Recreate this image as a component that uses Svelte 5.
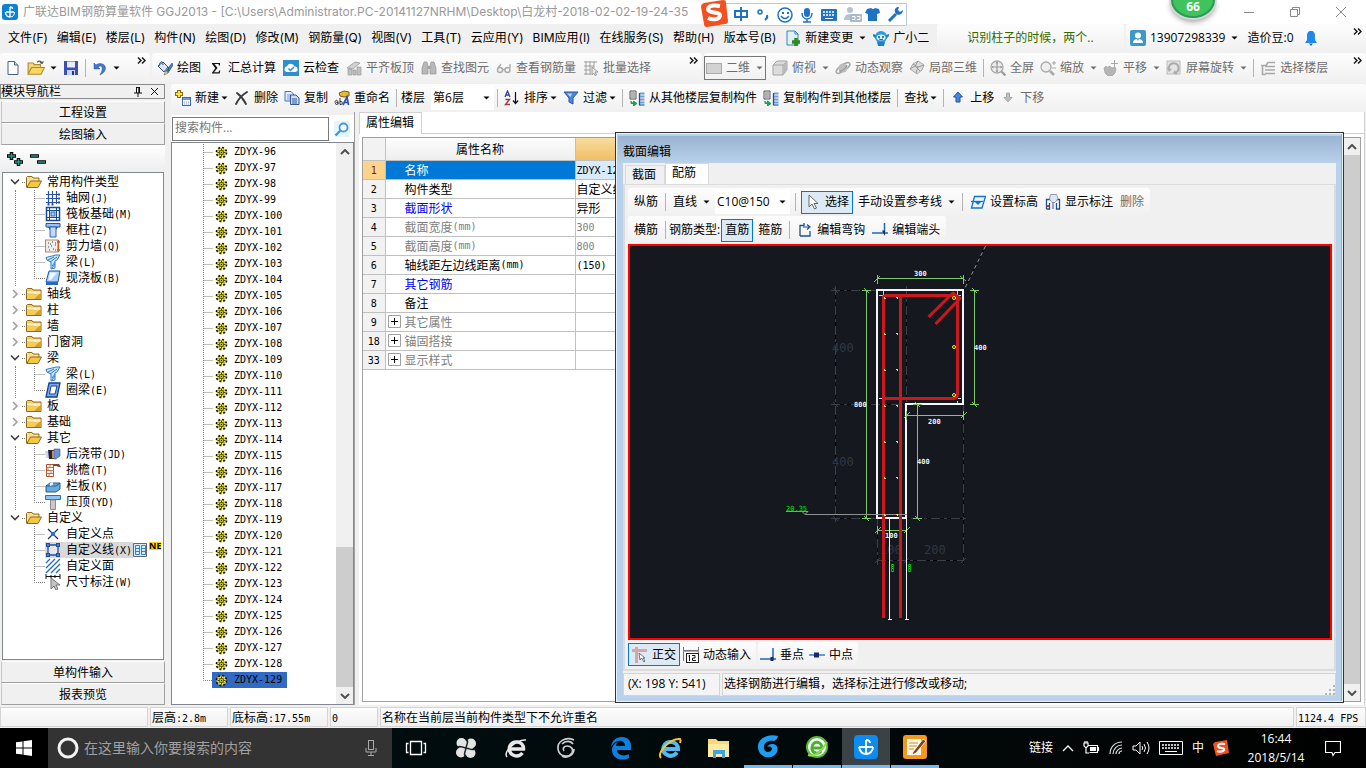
<script>
  const icons = {
    app: '<rect width="16" height="16" rx="3" fill="#0a82d8"/><path d="M8 3v10M4 8h8M8 3c2 0 2.500 1 2.500 2M8 13c-2.500 0-4.500-1.500-4.500-5" fill="none" stroke="#fff" stroke-width="1.400"/><path d="M8 13c3 0 4.500-2 4.500-5" fill="none" stroke="#fff"/>',
    new: '<path d="M3 1.500h6.500L13 5v9.500H3z" fill="#fff" stroke="#4a5f85"/><path d="M9.500 1.500V5H13" fill="#cfdcf0" stroke="#4a5f85"/>',
    open: '<path d="M1 13V3.500h4.500l1 1.500H12v3" fill="#f5d67c" stroke="#b08a2e"/><path d="M1 13.500 4 7.500h11.500L12.500 13.500z" fill="#fbd65f" stroke="#b08a2e"/><path d="M9 3c2-2 4-1 4.500 1m0 0 1-2m-1 2-2-1" fill="none" stroke="#555"/>',
    save: '<path d="M1 1h14v14H1z" fill="#3c4fb4"/><path d="M4 1.500h8v6H4z" fill="#e8edfb"/><path d="M4 10h8v5H4z" fill="#c7d3f5"/><path d="M9 11h2v4H9z" fill="#26348a"/>',
    undo: '<path d="M2 3v6h6L6 7c3-2.500 6 0 3 6l-1 2c6-3 7-8 3.500-10.500C9 3 6 3.500 4 5z" fill="#3f76cf" stroke="#2a579f" stroke-width=".5"/>',
    paint: '<path d="m1 6 5-4 5 5-4 5z" fill="#dbe6f6" stroke="#35506f"/><path d="M2 6c1-5 4-6 4-1" fill="none" stroke="#35506f"/><path d="m15 3-6 8-2 4 4-2 5-8z" fill="#3f7ad0" stroke="#1d477f" stroke-width=".6"/><path d="m7 15 2-4 2 2z" fill="#e9c34a"/><path d="M11 7c1 1 1 3 0 4" stroke="#35506f" fill="none"/>',
    sigma: '<path d="M4 3h8v2.500h-1L10.500 4H6.500l3 4-3.500 4.200h4.500l.7-1.700h1L11.700 13.500H4v-.8L7.300 8.300 4 3.800z" fill="#111"/>',
    cloud: '<rect width="16" height="16" fill="#2d8fd0"/><path d="M3.500 12a3 3 0 0 1 .5-5.800 4 4 0 0 1 7.500.3 2.800 2.800 0 0 1 1 5.500z" fill="#fff"/><path d="m5.500 8.500 2 2 3.500-3.500" fill="none" stroke="#2d8fd0" stroke-width="1.500"/>',
    align: '<path d="m1 8 8-6 5 1-7 6z" fill="#d0d0d0" stroke="#9a9a9a" stroke-width=".8"/><path d="M2 9h4v6H2zM7 10h3v5H7zM11 7h4v8h-4z" fill="#c0c0c0" stroke="#9a9a9a" stroke-width=".7"/>',
    binoc: '<path d="M3 2h3l1 4v8H1V8zm7 0h3l2 6v6H9V6z" fill="#b8b8b8" stroke="#969696" stroke-width=".7"/><path d="M6 6h4v3H6z" fill="#a5a5a5"/>',
    glasses: '<circle cx="4" cy="10" r="2.500" fill="none" stroke="#aaa" stroke-width="1.500"/><circle cx="11.500" cy="10" r="2.500" fill="none" stroke="#aaa" stroke-width="1.500"/><path d="M6.500 9.500h2.500M2 8l3-4M14 8V4" stroke="#aaa" fill="none" stroke-width="1.300"/>',
    batch: '<path d="M1 2h13M1 6h10M1 10h7M1 14h7M3 1v14M7 1v14M11 1v7" stroke="#a0a0a0" fill="none"/><path d="m9 7 6 5h-3l1.500 3-1.500.6L10.600 13 9 15z" fill="#eee" stroke="#999"/>',
    view2d: '<rect x="0.500" y="3.500" width="15" height="10" fill="#d2d2d2" stroke="#aaa"/>',
    cube: '<path d="M1 5l4-4h10v9l-4 5H1z" fill="#dcdcdc" stroke="#a4a4a4"/><path d="M1 5h10v10M11 5l4-4" fill="none" stroke="#a4a4a4"/><path d="M11 5l4-4v9l-4 5z" fill="#bbb"/>',
    orbit: '<ellipse cx="8" cy="8" rx="8" ry="3" transform="rotate(-35 8 8)" fill="none" stroke="#aaa" stroke-width="1.500"/><circle cx="8" cy="8" r="4.500" fill="#bdbdbd"/><path d="M4 11c3 1 7-3 8-6" stroke="#888" fill="none"/>',
    local3d: '<path d="m1 9 3-5 5-3 6 4-2 5-5 4z" fill="#ddd" stroke="#aaa"/><path d="m1 9 5-3 5 5M4 4l5 3 6-2M6 6l3-5M9 7l-2 6" fill="none" stroke="#999"/>',
    fit: '<circle cx="7" cy="7" r="6" fill="#eee" stroke="#aaa" stroke-width="1.300"/><path d="M7 2v10M2 7h10" stroke="#999" stroke-width="1.200"/><path d="M11.500 11.500l4 4" stroke="#999" stroke-width="2.200"/><path d="m5.500 3.500 1.500-2 1.500 2zm0 7 1.500 2 1.500-2zM3.500 5.500l-2 1.500 2 1.500zm7 0 2 1.500-2 1.500z" fill="#999"/>',
    zoom: '<circle cx="6" cy="7" r="5" fill="#eee" stroke="#aaa" stroke-width="1.300"/><path d="M10 11l4 4" stroke="#aaa" stroke-width="2.500"/><path d="M12 3h4M14 1v4M12 8h4" stroke="#aaa"/>',
    pan: '<path d="M1 8l2-2 2 2 1-2 2 1 1 1 3-1 1 2-1 4-3 3H5l-3-3z" fill="#b5b5b5" stroke="#999" stroke-width=".6"/><path d="M11.500 0v7M8 3.500h7" stroke="#aaa"/>',
    rotate: '<rect x="1" y="1" width="13" height="13" fill="#e4e4e4" stroke="#bbb"/><path d="M3 10a5 5 0 1 1 6 3" fill="none" stroke="#aaa" stroke-width="2"/><path d="m1 8 2 4 3-3zM9 10l-2 3 4 2z" fill="#aaa"/>',
    floor: '<path d="M1 5.500h5l2-3h7M5 6.500h10M5 10h10M5 13.500h10M2.500 6v8.500h3" stroke="#a8a8a8" stroke-width="1.600" fill="none"/>',
    newcomp: '<path d="M4 0v8M0 4h8" stroke="#8a6e00" stroke-width="4"/><path d="M4 1v6M1 4h6" stroke="#ffe34a" stroke-width="2"/><rect x="7.500" y="7.500" width="8" height="8" fill="#fff" stroke="#4169b4"/><path d="M8 8h7v2H8z" fill="#6f95dd"/><path d="M9 12h5M9 14h5" stroke="#6f95dd" stroke-dasharray="1 1"/>',
    del: '<path d="M3 3c4 3 7 7 9 11M13 2C8 5 4 10 2 14" stroke="#3c3c3c" stroke-width="1.900" fill="none" stroke-linecap="round"/>',
    copy: '<path d="M1 1.500h6l2.500 2.500v7H1z" fill="#e3edfb" stroke="#4672b8"/><path d="M3 5h4M3 7h4M3 9h4" stroke="#6f95dd"/><path d="M6.500 5h5.500l3 3v6.500H6.500z" fill="#c9dcf8" stroke="#34589b"/><path d="M8 9h5M8 11h5M8 13h5" stroke="#34589b"/>',
    rename: '<path d="m5 3 5-2 5 1v4l-5 1-4-1z" fill="#e8b83a" stroke="#7a5c10"/><path d="M1 12.500c0-3 3-3 3 0v2m0-2c-3-1-3 2-1.500 2S4 13.500 4 12.500M6 8v6.500c3 1 3-4 0-3" fill="none" stroke="#333"/><path d="m9 15 4-8 1.500 8M10.500 12.500h4" fill="none" stroke="#2a56b8" stroke-width="1.700"/>',
    sort: '<path d="M1 7l2.500-6L6 7M2 5h3" fill="none" stroke="#33478f" stroke-width="1.300"/><path d="M1.500 9.500h4l-4 5h4.500" fill="none" stroke="#a13c4c" stroke-width="1.400"/><path d="M11.500 2v11M9 10.500l2.500 3 2.500-3" fill="none" stroke="#111" stroke-width="1.200"/>',
    filter: '<path d="M1 2h14L10 8v6l-4-2V8z" fill="#4e86dd" stroke="#2555a5"/><path d="M4 3.500h5L7.500 7z" fill="#b8d4ff"/>',
    copyfrom: '<path d="M1 1h6v8H1z" fill="#eee" stroke="#555"/><path d="M2 3h4M2 5h4M2 7h4" stroke="#777"/><path d="M11 3.500h4.500M11 6.500h4.500M11 9.500h4.500M11 12.500h4.500M11 15h4.500" stroke="#6f9fd8" stroke-width="1.800"/><path d="M10.500 3v12.500" stroke="#1f4f96" stroke-width="1.300"/><path d="M2 11v2.500h3M4.500 11v5L8 13.500z" stroke="#1ca349" fill="#1ca349"/>',
    newchange: '<path d="M2 1h8l3 3v11H2z" fill="#dff0fb" stroke="#3a86b8"/><path d="M10 1v3h3" fill="none" stroke="#3a86b8"/><path d="M11 8v8M7 12h8" stroke="#2e8c1e" stroke-width="3.500"/>',
    robot: '<circle cx="8" cy="7" r="6" fill="#2a9be0"/><path d="M0 4l3 1v4L0 6zM16 4l-3 1v4l3-3zM4 12h8l-1 4H5z" fill="#1d7fc4"/><ellipse cx="8" cy="7.500" rx="4.500" ry="3" fill="#d9f0fc"/><circle cx="6" cy="7" r="1" fill="#16577f"/><circle cx="10" cy="7" r="1" fill="#16577f"/><path d="M6 9q2 1.500 4 0" stroke="#16577f" fill="none"/>',
    user: '<rect width="16" height="16" rx="2" fill="#3d97c8"/><circle cx="8" cy="5.500" r="3" fill="#fff"/><path d="M3 13q0-4 5-4t5 4z" fill="#fff"/><path d="m7 9 1 2 1-2z" fill="#3d97c8"/>',
    bell: '<path d="M8 1c3 0 4 2 4 5v4l2 3H2l2-3V6c0-3 1-5 4-5z" fill="#1e88ef"/><path d="M6 13.500h4L8 16z" fill="#1560b8"/>',
    up: '<path d="M8 2l4.500 5H10v5H6V7H3.500z" fill="#4a86e8" stroke="#244f9c"/>',
    down: '<path d="M8 12l4-4.500H9.500V3h-3v4.500H4z" fill="#bdbdbd" stroke="#a9a9a9"/>',
    search: '<rect width="16" height="16" fill="#e9f3fb"/><circle cx="9.500" cy="6.500" r="4" fill="#fff" stroke="#3b9be0" stroke-width="1.800"/><path d="m6.500 9.500-5 5" stroke="#3b9be0" stroke-width="2.400"/>',
    folder: '<path d="M.5 13.500v-10l1-1H6l1 1.500h8v9.500z" fill="#f4cb5e" stroke="#8d6a1e"/><path d="M1 5.500h13.500V8L1 7z" fill="#fff2c0"/><path d="M8 13l6.500-6v6z" fill="#d79f2e"/>',
    folderopen: '<path d="M.5 13.500v-10l1-1H6l1 1.500h6v3" fill="#fbe08a" stroke="#8d6a1e"/><path d="M1 13.500 4.500 7H15.500L12 13.500z" fill="#f6c64a" stroke="#8d6a1e"/>',
    grid: '<path d="M3.500 1v13M7.500 1v13M11.500 1v13M1 4.500h13M1 8.500h13M1 12.500h13" stroke="#2b50a8" stroke-width="1.200"/><path d="M13 3.500h2v2h-2zM13 7.500h2v2h-2zM13 11.500h2v2h-2zM2.500 13.500h2v2h-2zM6.500 13.500h2v2h-2z" fill="#2b50a8"/>',
    raft: '<rect x="1.500" y="1.500" width="13" height="13" fill="#fff" stroke="#174a91" stroke-width="1.500"/><path d="M4.500 1v14M11.500 1v14M1 4.500h14M1 11.500h14" stroke="#174a91"/><rect x="6" y="6" width="4" height="4" fill="#a6c8ee" stroke="#2f69b8"/>',
    column: '<path d="M1 1.500h14V5H1z" fill="#9cc0f5" stroke="#23539f"/><path d="M5 5h6v10H5z" fill="#c5dafb" stroke="#2b64c4"/><path d="M3 5h2v3zm10 0h-2v3z" fill="#23539f"/>',
    wall: '<rect x=".5" y="2" width="12.500" height="12" fill="#eee" stroke="#b78566"/><path d="M3 5h1m3-1h1m2 3h1M3 9h1m2-1h1m1 3h1m-5 1h1m5 0h1M5 6h1m4-1h1" stroke="#444"/><path d="M13.500 2v12M12 4h3M12 12h3" stroke="#c26028" stroke-width="1.300"/>',
    beam: '<path d="M1 3.500 11 1h4l-3 5-2 1v7l-4 1V8L2 6z" fill="#cfe5fb" stroke="#2a7fcb"/><path d="m3 6 6-3M5 8l7-5M7 12l3-4M7 14l3-4" stroke="#2a7fcb"/>',
    slab: '<path d="M4 1h11l-2 11H1z" fill="#a9cff7" stroke="#1e56a8"/><path d="M1 12h12v3H1z" fill="#2b64c4"/><path d="M5 2.500h7L6 10H3.500z" fill="#f0f8ff"/>',
    ringbeam: '<path d="M4 1h11l-3 14H1z" fill="#7fa8e6" stroke="#123f96" stroke-width="1.300"/><path d="M6 4h6l-2 8H4.500z" fill="#fff" stroke="#123f96"/>',
    strip: '<path d="M0 5h6v7H1z" fill="#cfd6e3"/><path d="M4 4h7v9H5z" fill="#70371a"/><path d="M9 3h6v7l-4 3H9z" fill="#6e92d4" stroke="#30509a" stroke-width=".6"/><path d="M3 4h4v9H4z" fill="#1b2540"/><path d="M7 5h2v7H7z" fill="#d68a4c"/>',
    eave: '<path d="M1.500 2.500h7v12h-7z" fill="#fff" stroke="#b5552c"/><path d="M1 5.500h8M1 8.500h8M1 11.500h8M5 2v3M3 6v3M6 9v3M4 12v3" stroke="#b5552c" stroke-width=".8"/><path d="M8 2h6l2 3-2 0-3-1H8z" fill="#7b4a34"/>',
    rail: '<path d="m1 8 4-3h10v6l-4 3H1z" fill="#6da9d8" stroke="#1f5f96"/><path d="m1 8h10l4-3" fill="none" stroke="#1f5f96"/><path d="M5 5l3-1v3l-3 1z" fill="#e0f0fb"/>',
    cap: '<path d="M.5 1.500h15v4H.5z" fill="#8fc5f5" stroke="#1f72c4"/><path d="M5.500 6h5v9.500h-5z" fill="#c9c9c9" stroke="#8c8c8c"/>',
    cpoint: '<path d="M3 3l10 10M13 3 3 13" stroke="#1b2f63" stroke-width="1.200"/><rect x="6" y="6" width="4" height="4" fill="#2a70d0"/>',
    cline: '<path d="M3 3h10v10H3z" fill="#e6e6e6" stroke="#1e4fa3" stroke-width="1.300"/><path d="M1 1h4v4H1zM11 1h4v4h-4zM1 11h4v4H1zM11 11h4v4h-4z" fill="#1e4fa3"/><path d="M2.500 2.500h1v1h-1zm10 0h1v1h-1zm-10 10h1v1h-1zm10 0h1v1h-1z" fill="#fff"/>',
    carea: '<path d="M1 5l4-4M1 10l9-9M1 15 15 1M6 15l9-9M11 15l4-4" stroke="#2367c9" stroke-width="1.300"/>',
    dim: '<path d="M1 0v5M15 0v5M1 2.500h14M6 1v3M10 1v3" stroke="#111"/><path d="m6 4 9 7h-4l2 4-2 1-2-4-3 3z" fill="#c4c4c4" stroke="#777"/>',
    gear: '<circle cx="8" cy="8" r="6" fill="#f2ee2c" stroke="#111" stroke-width="2.400" stroke-dasharray="2.400 2.300"/><circle cx="8" cy="8" r="5" fill="#f2ee2c"/><path d="M8 3v10M3 8h10" stroke="#222"/><circle cx="8" cy="8" r="2.600" fill="#f2ee2c" stroke="#222"/><circle cx="8" cy="8" r="1" fill="#111"/><path d="M4.500 4.500h1.200v1.200H4.500zM10.300 4.500h1.200v1.200h-1.200zM4.500 10.300h1.200v1.200H4.500zM10.300 10.300h1.200v1.200h-1.200z" fill="#222"/>',
    cursor: '<path d="M4 1v12l3-3 2.500 5 2-1L9 9.500h4z" fill="#fff" stroke="#666"/>',
    elev: '<path d="M4.500 2.500h11L12 14H1.500z" fill="#e8f3fd" stroke="#1473c8" stroke-width="1.300"/><path d="M1 7.500h12" stroke="#1473c8" stroke-width="1.300"/><path d="M5 8h6l-3 3z" fill="#1473c8"/>',
    annot: '<path d="M1.500 15V5.500h13V15h-3V9M1.500 15h3V9" fill="#fff" stroke="#214f8b" stroke-width="1.300"/><path d="M8 15V7" stroke="#214f8b"/><path d="M5.500.500h6l1.500 4-3 4H7L4.500 5z" fill="#dfe6f2" stroke="#7b8699" stroke-width=".8"/><path d="M2 11h2v2H2z" fill="#d23b1e"/>',
    hook: '<path d="M3 14V3.500h4V1M3 14h10V9" fill="none" stroke="#214f8b" stroke-width="1.300"/><path d="M6 5h6m-2-2.500L13 5l-3 2.500" fill="none" stroke="#214f8b" stroke-width="1.200"/>',
    end: '<path d="M0 11h16M12.500 1v11" stroke="#1e68b8" stroke-width="1.500"/><path d="M10 8.500h3V14z" fill="#1d2d63"/>',
    ortho: '<path d="M0 2h15v3H0z M3 0h3v16H3z" fill="#dba4a4"/><path d="m7 6 1 7 1.500-2L12 15l1-1-2-3h2z" fill="#fff" stroke="#555" stroke-width=".8"/>',
    dyn: '<path d="M.5 0v14M15.500 0v6M.5 3.500h15" stroke="#777"/><path d="M.5 4.500h15" stroke="#d99"/><rect x="3.500" y="6.500" width="12" height="9" fill="#fff" stroke="#222"/><path d="M6.500 8v6M5.500 9h1M9 8.500h3v2.500H9.500v2.500H13" fill="none" stroke="#111"/>',
    perp: '<path d="M0 12h16M13 1v12" stroke="#1e68b8" stroke-width="1.500"/><path d="M10.500 10h3v4h-3z" fill="#1d2d63"/>',
    mid: '<path d="M0 8h16" stroke="#1e68b8" stroke-width="1.300"/><path d="M5 5.500h5v5H5z" fill="#142a6d"/>'
  };
  icons.copyto = icons.copyfrom;

  const menus = ['文件(F)', '编辑(E)', '楼层(L)', '构件(N)', '绘图(D)', '修改(M)', '钢筋量(Q)', '视图(V)', '工具(T)', '云应用(Y)', 'BIM应用(I)', '在线服务(S)', '帮助(H)', '版本号(B)'];

  const editTools = [
    { i: 'paint', t: '绘图' }, { i: 'sigma', t: '汇总计算' }, { i: 'cloud', t: '云检查' },
    { i: 'align', t: '平齐板顶', off: true }, { i: 'binoc', t: '查找图元', off: true },
    { i: 'glasses', t: '查看钢筋量', off: true }, { i: 'batch', t: '批量选择', off: true }
  ];
  const viewTools = [
    { i: 'cube', t: '俯视', a: true }, { i: 'orbit', t: '动态观察' }, { i: 'local3d', t: '局部三维' }, { sep: true },
    { i: 'fit', t: '全屏' }, { i: 'zoom', t: '缩放', a: true }, { i: 'pan', t: '平移', a: true },
    { i: 'rotate', t: '屏幕旋转', a: true }, { sep: true }, { i: 'floor', t: '选择楼层' }
  ];

  const tree = [
    { t: '常用构件类型', open: true, c: [['grid', '轴网(J)'], ['raft', '筏板基础(M)'], ['column', '框柱(Z)'], ['wall', '剪力墙(Q)'], ['beam', '梁(L)'], ['slab', '现浇板(B)']] },
    { t: '轴线' }, { t: '柱' }, { t: '墙' }, { t: '门窗洞' },
    { t: '梁', open: true, c: [['beam', '梁(L)'], ['ringbeam', '圈梁(E)']] },
    { t: '板' }, { t: '基础' },
    { t: '其它', open: true, c: [['strip', '后浇带(JD)'], ['eave', '挑檐(T)'], ['rail', '栏板(K)'], ['cap', '压顶(YD)']] },
    { t: '自定义', open: true, last: true, c: [['cpoint', '自定义点'], ['cline', '自定义线(X)'], ['carea', '自定义面'], ['dim', '尺寸标注(W)']] }
  ];

  const members = Array.from({ length: 34 }, (_, n) => `ZDYX-${96 + n}`);
  let current = $state('ZDYX-129');

  const props = [
    { n: 1, k: '名称', v: 'ZDYX-129', cls: 'sel' },
    { n: 2, k: '构件类型', v: '自定义线' },
    { n: 3, k: '截面形状', v: '异形', cls: 'key' },
    { n: 4, k: '截面宽度(mm)', v: '300', cls: 'dim' },
    { n: 5, k: '截面高度(mm)', v: '800', cls: 'dim' },
    { n: 6, k: '轴线距左边线距离(mm)', v: '(150)' },
    { n: 7, k: '其它钢筋', v: '', cls: 'key' },
    { n: 8, k: '备注', v: '' },
    { n: 9, k: '其它属性', v: '', cls: 'dim', plus: true },
    { n: 18, k: '锚固搭接', v: '', cls: 'dim', plus: true },
    { n: 33, k: '显示样式', v: '', cls: 'dim', plus: true }
  ];

  const bars = [298, 334, 370, 406, 442, 478, 515];

  const split = (s) => s.match(/[\x20-\x7e]+|[^\x20-\x7e]+/g) ?? [];
  const latin = (s) => /^[\x20-\x7e]/.test(s);
</script>

{#snippet icon(name, size = 16)}<svg class="ic" width={size} height={size} viewBox="0 0 16 16" aria-hidden="true">{@html icons[name]}</svg>{/snippet}

{#snippet arrow()}<svg class="arr" width="7" height="4" viewBox="0 0 7 4" aria-hidden="true"><path d="M0.500 0.500h6L3.500 3.500z" fill="currentColor" /></svg>{/snippet}

{#snippet more()}<button class="more" aria-label="更多"><svg width="9" height="7" viewBox="0 0 9 7"><path d="M1 0.500l3 3-3 3M5 0.500l3 3-3 3" fill="none" stroke="#111" stroke-width="1.400" /></svg></button>{/snippet}

{#snippet song(s)}{#each split(s) as p}{#if latin(p)}<span class="half">{p}</span>{:else}{p}{/if}{/each}{/snippet}

{#snippet tool(name, text, off = false, drop = false)}<button class="tool" class:off>{#if name}{@render icon(name)}{/if}<span>{text}</span>{#if drop}{@render arrow()}{/if}</button>{/snippet}

{#snippet chevron(down)}<svg width="10" height="6" viewBox="0 0 10 6" aria-hidden="true"><path d={down ? 'M1 1l4 4 4-4' : 'M1 5l4-4 4 4'} fill="none" stroke="#505050" stroke-width="2" /></svg>{/snippet}

<div class="app">
  <header class="title">
    {@render icon('app')}
    <span class="caption">广联达BIM钢筋算量软件 GGJ2013 - [C:\Users\Administrator.PC-20141127NRHM\Desktop\白龙村-2018-02-02-19-24-35</span>
    <div class="winbtns">
      <button aria-label="最小化"><svg width="12" height="12" viewBox="0 0 12 12"><path d="M1 6.500h10" stroke="#888" /></svg></button>
      <button aria-label="还原"><svg width="12" height="12" viewBox="0 0 12 12"><path d="M1.500 3.500h7v7h-7zM3.500 3.500v-2h7v7h-2" fill="none" stroke="#888" /></svg></button>
      <button aria-label="关闭"><svg width="12" height="12" viewBox="0 0 12 12"><path d="M1 1l10 10M11 1 1 11" stroke="#888" /></svg></button>
    </div>
  </header>

  <div class="ime">
    <svg width="207" height="27" viewBox="0 0 207 27" role="img" aria-label="输入法工具栏">
      <path d="M10 3.500h196.500v22H10z" fill="#fff" stroke="#b4cbe0" />
      <path d="M4 3 23 0q3 0 3 3l2 18q0 3-3 3L7 27q-3 0-3-3L1 7q0-3 3-4z" fill="#f2501e" />
      <path d="M20 6q-11-2-12 3c0 5 13 2 12 7-1 4-8 4-12 2" fill="none" stroke="#fff" stroke-width="4" />
      <g fill="none" stroke="#1f72c4" stroke-width="2">
        <path d="M35 11h12v6H35zM41 7v14" />
        <circle cx="60" cy="12" r="2" stroke-width="1.500" /><path d="M67 15q1 3-2 5" />
        <circle cx="85" cy="15" r="7" stroke-width="1.500" /><path d="M81 16q4 5 8 0" stroke-width="1.500" />
        <path d="M102 13c0 8 10 8 10 0M107 19v3M103 22h8" stroke-width="1.500" />
        <path d="M189 21l7-7" stroke-width="3" />
      </g>
      <path d="M82 12h2v2h-2zM87 12h2v2h-2zM104 11a3 3 0 0 1 6 0v3a3 3 0 0 1-6 0zM167 9l4-1q2 2 4 0l4 1 1 4-3 1v7h-9v-7l-3-1zM195 12c-1-3 1-5 4-5l-1 3 2 2 3-2c0 4-4 6-7 4z" fill="#1f72c4" />
      <rect x="121" y="9" width="16" height="12" rx="1" fill="#1f72c4" />
      <path d="M123 12h12M123 15h12" stroke="#fff" stroke-width="1.500" stroke-dasharray="2 1" /><path d="M125 18.500h8" stroke="#fff" />
      <circle cx="150" cy="10" r="3" fill="#b5c3d6" /><path d="M144 20q0-6 6-6t6 6z" fill="#b5c3d6" />
      <rect x="150" y="14" width="12" height="8" rx="1" fill="#a9b9cf" /><path d="M152 16.500h3v3h-3M157 16.500h3v3h-3" stroke="#fff" fill="none" />
    </svg>
  </div>
  <div class="ball">66</div>

  <div class="menurow">
    <nav class="menus">
      {#each menus as m}<button>{m}</button>{/each}
      <div class="extra">
        {@render tool('newchange', '新建变更', false, true)}
        {@render tool('robot', '广小二')}
      </div>
    </nav>
    <div class="band notice"><a href="#notice">识别柱子的时候，两个..</a></div>
    <div class="band account">
      {@render tool('user', '13907298339', false, true)}
      <span>造价豆:0</span>
      {@render icon('bell')}
      {@render more()}
    </div>
  </div>

  <div class="toolrow">
    <div class="band files">
      <button aria-label="新建">{@render icon('new')}</button>
      <button aria-label="打开">{@render icon('open', 18)}{@render arrow()}</button>
      <button aria-label="保存">{@render icon('save')}</button>
      <i class="sep"></i>
      <button aria-label="撤销">{@render icon('undo')}{@render arrow()}</button>
      {@render more()}
    </div>
    <div class="band edit">
      {#each editTools as e}{@render tool(e.i, e.t, e.off)}{/each}
      {@render more()}
    </div>
    <div class="band view">
      <div class="mode">{@render tool('view2d', '二维', true, true)}</div>
      {#each viewTools as e}{#if e.sep}<i class="sep"></i>{:else}{@render tool(e.i, e.t, true, e.a)}{/if}{/each}
      {@render more()}
    </div>
  </div>

  <main>
    <aside class="nav">
      <div class="navhead"><span>模块导航栏</span>
        <svg width="26" height="10" viewBox="0 0 26 10" aria-hidden="true"><path d="M2 .5h4M2.500 0v6M5.500 0v6M0 6h8M4 6v4M4.800 1v5" stroke="#111" fill="none" /><path d="M17 1l7 7M24 1l-7 7" stroke="#111" /></svg>
      </div>
      <button class="flat">工程设置</button>
      <button class="flat">绘图输入</button>
      <div class="expand">
        <button aria-label="全部展开"><svg width="17" height="16" viewBox="0 0 17 16"><path d="M0 5h9M4.500 1v8M7 11h9M11.500 7v8" stroke="#000" stroke-width="3.500" /><path d="M1 5h7M4.500 2v6M8 11h7M11.500 8v6" stroke="#1c9a94" stroke-width="1.500" /></svg></button>
        <button aria-label="全部折叠"><svg width="17" height="16" viewBox="0 0 17 16"><path d="M0 5h9M7 11h9" stroke="#000" stroke-width="3.500" /><path d="M1 5h7M8 11h7" stroke="#1c9a94" stroke-width="1.500" /></svg></button>
      </div>
      <ul class="tree">
        {#each tree as g}
          <li>
            <div class="row">
              <svg width="19" height="16" viewBox="0 0 19 16" aria-hidden="true">
                <path d={g.open ? 'M4 5.500l4 4 4-4' : 'M6 4l4 4-4 4'} fill="none" stroke={g.open ? '#404040' : '#a0a0a0'} stroke-width="1.600" />
                <path d="M15 8.500h4" stroke="#808080" stroke-dasharray="1 1" />
              </svg>
              {@render icon(g.open ? 'folderopen' : 'folder')}<span>{g.t}</span>
            </div>
            {#if g.c}
              <ul class="sub" class:last={g.last}>
                {#each g.c as [ic, label], n}
                  <li class="row">
                    <svg width="11" height="16" viewBox="0 0 11 16" aria-hidden="true"><path d={n === g.c.length - 1 ? 'M.5 0V8.500H11' : 'M.5 0V16M.5 8.500H11'} fill="none" stroke="#808080" stroke-dasharray="1 1" /></svg>
                    <span class="node" class:picked={ic === 'cline'}>{@render icon(ic)}<span>{@render song(label)}</span></span>
                    {#if ic === 'cline'}
                      <svg width="14" height="14" viewBox="0 0 14 14" aria-hidden="true"><path d="M.5.5h13v13H.5z" fill="#d8ecfb" stroke="#666" /><path d="M2.500 2.500h4v9h-4zM8.500 2.500h4v9h-4zM3 5.500h3M3 8.500h3M9 5.500h3M9 8.500h3" fill="none" stroke="#2a84d8" /></svg>
                      <b class="ne">NE</b>
                    {/if}
                  </li>
                {/each}
              </ul>
            {/if}
          </li>
        {/each}
      </ul>
      <button class="flat">单构件输入</button>
      <button class="flat">报表预览</button>
    </aside>

    <section class="work">
      <div class="band comp">
        {@render tool('newcomp', '新建', false, true)}
        {@render tool('del', '删除')}
        {@render tool('copy', '复制')}
        {@render tool('rename', '重命名')}
        <i class="sep"></i>
        <label class="pick">楼层 <span class="combo"><select><option>第6层</option></select>{@render arrow()}</span></label>
        <i class="sep"></i>
        {@render tool('sort', '排序', false, true)}
        {@render tool('filter', '过滤', false, true)}
        <i class="sep"></i>
        {@render tool('copyfrom', '从其他楼层复制构件')}
        {@render tool('copyto', '复制构件到其他楼层')}
        <i class="sep"></i>
        {@render tool('', '查找', false, true)}
        <i class="sep"></i>
        {@render tool('up', '上移')}
        {@render tool('down', '下移', true)}
      </div>

      <div class="panes">
        <div class="list">
          <div class="find">
            <input aria-label="搜索构件" placeholder="搜索构件..." />
            <button aria-label="搜索">{@render icon('search')}</button>
          </div>
          <div class="listbox">
            <ul>
              {#each members as m, n}
                <li>
                  <svg width="10" height="16" viewBox="0 0 10 16" aria-hidden="true"><path d={n === members.length - 1 ? 'M.5 0V8.500H10' : 'M.5 0V16M.5 8.500H10'} fill="none" stroke="#808080" stroke-dasharray="1 1" /></svg>
                  <button class="member" class:on={m === current} onclick={() => (current = m)}>{@render icon('gear', 13)}<span class="half">{m}</span></button>
                </li>
              {/each}
            </ul>
            <div class="scroll low"><span class="cap">{@render chevron(false)}</span><span class="thumb"></span><span class="cap">{@render chevron(true)}</span></div>
          </div>
        </div>

        <div class="props">
          <div class="ptab"><span>属性编辑</span></div>
          <div class="pbody">
            <table>
              <thead><tr><th class="num"></th><th class="key">属性名称</th><th class="val"></th></tr></thead>
              <tbody>
                {#each props as p}
                  <tr class={p.cls ?? ''}>
                    <th class="num"><span class="half">{p.n}</span></th>
                    <td><div class="cell"><span class="plusbox">{#if p.plus}<svg width="13" height="13" viewBox="0 0 13 13"><path d="M.5.5h12v12H.5z" fill="#fff" stroke="#a0a0a0" /><path d="M3 6.500h7M6.500 3v7" stroke="#000" /></svg>{/if}</span>{@render song(p.k)}</div></td>
                    <td class="v">{@render song(p.v)}</td>
                  </tr>
                {/each}
              </tbody>
            </table>
            <div class="scroll"><span class="cap">{@render chevron(false)}</span><span class="thumb"></span><span class="cap">{@render chevron(true)}</span></div>
          </div>

          <div class="dialog">
            <div class="dtitle">截面编辑</div>
            <div class="client">
              <div class="tabs"><button>截面</button><button class="on">配筋</button></div>
              <div class="pane">
                <div class="band drow">
                  {@render tool('', '纵筋')}
                  <i class="sep"></i>
                  {@render tool('', '直线', false, true)}
                  <span class="combo wide"><select aria-label="钢筋规格"><option>C10@150</option></select>{@render arrow()}</span>
                  <i class="sep"></i>
                  <span class="pressed">{@render tool('cursor', '选择')}</span>
                  {@render tool('', '手动设置参考线', false, true)}
                  <i class="sep"></i>
                  {@render tool('elev', '设置标高')}
                  {@render tool('annot', '显示标注')}
                  {@render tool('', '删除', true)}
                </div>
                <div class="band drow">
                  {@render tool('', '横筋')}
                  <i class="sep"></i>
                  <span class="lab">钢筋类型:</span>
                  <span class="pressed">{@render tool('', '直筋')}</span>
                  {@render tool('', '箍筋')}
                  <i class="sep"></i>
                  {@render tool('hook', '编辑弯钩')}
                  {@render tool('end', '编辑端头')}
                </div>

                <div class="canvas">
                  <svg width="700" height="391" viewBox="630 246 700 391" role="img" aria-label="截面配筋图">
                    <g fill="none" stroke="#000"><path d="M835.500 286V522M831 290.500H877M831 404.500H906M831 518.500H966M906.500 286V404M963.500 404V565M877.500 519V565M877 560.500H963" /></g>
                    <g fill="none" stroke="#39404b" stroke-dasharray="9 4 3 4"><path d="M835.500 286V522M831 290.500H877M831 404.500H906M831 518.500H966M906.500 286V404M963.500 404V565M877.500 519V565M877 560.500H963" /></g>
                    <path d="M833 288l5 5M833 402l5 5M833 516l5 5M875 563l5-5M904 563l5-5M961 563l5-5" stroke="#39404b" />
                    <g class="ghost"><text x="832" y="352">400</text><text x="832" y="466">400</text><text x="880" y="554">100</text><text x="924" y="554">200</text></g>
                    <path d="M985.500 246L965 288" stroke="#000" /><path d="M985.500 246L965 288" stroke="#9a9a9a" stroke-dasharray="4 3" />
                    <path d="M883.500 291v8M879 295.500h4M961 295.500h-6M957.500 291v4M879 398.500h4M957.500 404v-3M961 398.500h-3" stroke="#b9d4ea" fill="none" />
                    <path d="M877 290H963V404H906V518H877Z" fill="none" stroke="#f4f4f4" stroke-width="2" />
                    <g fill="none" stroke="#7fc867">
                      <path d="M877.500 275v9M963.500 275v9M877 278.500h86M874 282l6-6M960 276l6 5" />
                      <path d="M862 290.500h9M862 518.500h9M866.500 290v228M864 288l5 5M864 516l5 5" />
                      <path d="M970 290.500h9M970 404.500h9M974.500 290v114M972 288l5 5M972 402l5 5" />
                      <path d="M906.500 411v9M963.500 411v9M906 415.500h57M904 418l6-6M961 418l6-6" />
                      <path d="M913 404.500h9M913 518.500h9M917.500 404v114M915 402l5 5M915 516l5 5" />
                      <path d="M877.500 526v8M906.500 526v8M877 530.500h29M875 533l6-6M904 533l6-6" />
                    </g>
                    <g fill="none" stroke="#c9191e" stroke-width="3">
                      <path d="M883.500 618V297Q884 295.500 886 295.500H953L957.500 300V394Q957 398.500 953 398.500H884M900.500 296V618" />
                      <path d="M928.500 317L953 293L960 298.500L935.500 324" stroke-linejoin="round" />
                    </g>
                    <path d="M805 514.500H907M786 511.500h22l-3 3-3-3" stroke="#929292" fill="none" />
                    <path d="M889.500 518V619M906.500 518V619M888 619.500h4M905 619.500h4" stroke="#f4f4f4" fill="none" />
                    <g fill="#15181f" stroke="#ffee22"><circle cx="954" cy="298" r="1.500" /><circle cx="954" cy="347" r="1.500" /><circle cx="954" cy="395" r="1.500" /></g>
                    {#each bars as y}<path d="M884 {y - 1}h1v1h1v1h-2zM896 {y - 1}h2v2h-1v-1h-1z" fill="#ffe32a" />{/each}
                    <g class="mark"><text x="914" y="276">300</text><text x="974" y="350">400</text><text x="854" y="407">800</text><text x="928" y="424">200</text><text x="917" y="464">400</text><text x="885" y="538">100</text></g>
                    <text class="level" x="786" y="511">20.35</text>
                    <path d="M891 564.500h3M891 566.500h3M891 568.500h3M891 571.500h3M908 564.500h3M908 566.500h3M908 568.500h3M908 571.500h3" stroke="#00e400" fill="none" /><path d="M891.500 564v8M893.500 564v8M908.500 564v8M910.500 564v8" stroke="#00a800" />
                  </svg>
                </div>

                <div class="snaps">
                  <div class="band">
                    <span class="pressed">{@render tool('ortho', '正交')}</span>
                    {@render tool('dyn', '动态输入')}
                  </div>
                  <div class="band">
                    {@render tool('perp', '垂点')}
                    {@render tool('mid', '中点')}
                  </div>
                </div>
              </div>
              <div class="dstatus">
                <span class="coord">(X: 198 Y: 541)</span>
                <span class="hint">选择钢筋进行编辑，选择标注进行修改或移动;</span>
                <svg width="12" height="12" viewBox="0 0 12 12" aria-hidden="true"><path d="M9 1h2v2H9zM5 5h2v2H5zM9 5h2v2H9zM1 9h2v2H1zM5 9h2v2H5zM9 9h2v2H9z" fill="#b4b4b4" /></svg>
              </div>
            </div>
          </div>
        </div>
      </div>
    </section>
  </main>

  <footer class="status">
    <span></span>
    <span>{@render song('层高:2.8m')}</span>
    <span>{@render song('底标高:17.55m')}</span>
    <span>{@render song('0')}</span>
    <span>名称在当前层当前构件类型下不允许重名</span>
    <span>{@render song('1124.4 FPS')}</span>
  </footer>

  <div class="taskbar">
    <button class="start" aria-label="开始"><svg width="16" height="16" viewBox="0 0 16 16"><path d="M0 2.300 6.500 1.400V7.500H0zM7.500 1.200 16 0v7.500H7.500zM0 8.500h6.500v6.100L0 13.700zM7.500 8.500H16V16l-8.500-1.200z" fill="#fff" /></svg></button>
    <div class="cortana">
      <svg width="22" height="22" viewBox="0 0 22 22" aria-hidden="true"><circle cx="11" cy="11" r="9" fill="none" stroke="#f2f2f2" stroke-width="3" /></svg>
      <input aria-label="搜索" placeholder="在这里输入你要搜索的内容" />
      <svg width="12" height="18" viewBox="0 0 12 18" aria-hidden="true"><rect x="3.500" y="1.500" width="5" height="9" fill="none" stroke="#aaa" /><path d="M1 9v4h10V9M6 13v3M3 16.500h6" fill="none" stroke="#aaa" /></svg>
    </div>
    <div class="apps">
      <button aria-label="任务视图"><svg width="22" height="16" viewBox="0 0 22 16"><path d="M5.500 1.500h11v13h-11zM3.500 3.500h-2v9h2M18.500 3.500h2v9h-2" fill="none" stroke="#fff" stroke-width="1.300" /></svg></button>
      <button aria-label="风车"><svg width="24" height="24" viewBox="0 0 24 24"><g fill="#e4e4e4"><circle cx="7.500" cy="7" r="5" /><circle cx="17" cy="7.500" r="5" /><circle cx="7" cy="16.500" r="5" /><circle cx="16.500" cy="17" r="5" /><circle cx="12" cy="12" r="3" /></g><path d="M12 12C9 12 7 9 3 11M12 12c0-3 3-5 1-9M12 12c3 0 5 3 9 1M12 12c0 3-3 5-1 9" fill="none" stroke="#1a2326" stroke-width="1.500" /></svg></button>
      <button aria-label="浏览器"><svg width="24" height="24" viewBox="0 0 24 24"><path d="M5 13h14.500C20 5 8 3 5.500 11c-1.500 8 8 12 13 6" fill="none" stroke="#e8e8e8" stroke-width="3.500" /><path d="M3 21C-1 16 12 3 22 4" fill="none" stroke="#e8e8e8" stroke-width="1.500" /></svg></button>
      <button aria-label="旋涡"><svg width="24" height="24" viewBox="0 0 24 24"><path d="M20 4C11 0 3 6 4 13c1 8 11 9 14 4 2-4-1-7-5-7-3 0-5 3-3 5M20 13c0 6-7 10-12 7M8 8c4-4 9-3 11 0" fill="none" stroke="#cfcfcf" stroke-width="1.700" /></svg></button>
    </div>
    <div class="apps pinned">
      <button aria-label="Edge"><svg width="24" height="24" viewBox="0 0 24 24"><path d="M2 11C3 3 9 1 13 1c6 0 9 4 9 9v4H8c0 5 7 7 12 4v4c-9 4-17 0-17-8 0-4 3-7 6-8-2 2-2 3-2 4h9c0-7-10-7-14 1z" fill="#0f7fdc" /></svg></button>
      <button aria-label="IE"><svg width="24" height="24" viewBox="0 0 24 24"><path d="M5 13h15C20 5 8 3 5.500 11c-1.500 8 8 12 13.500 5.500" fill="none" stroke="#52b9ef" stroke-width="4" /><path d="M3 22C-2 17 12 2 22 3q1 1 0 4" fill="none" stroke="#f6c52c" stroke-width="2" /></svg></button>
      <button aria-label="资源管理器"><svg width="24" height="24" viewBox="0 0 24 24"><path d="M1 3h8l2 2h11v16H1z" fill="#f8d775" /><path d="M1 8h21v13H1z" fill="#fdeaa5" /><path d="M6 22v-8h12v8h-3v-4H9v4z" fill="#3aa5e2" /></svg></button>
      <button class="run" aria-label="广联达"><svg width="26" height="26" viewBox="0 0 26 26"><path d="M23 2C12-1 2 5 3 14c1 10 15 13 19 4 2-5-1-8-5-8-2 0-4 1-5 3 3-1 5 0 5 2-1 4-8 4-8-1C8 8 15 6 19 7q3-1 4-5z" fill="#1e9df0" /></svg></button>
      <button class="run" aria-label="安全浏览器"><svg width="26" height="26" viewBox="0 0 26 26"><circle cx="13" cy="13" r="10" fill="#fff" stroke="#53bd37" stroke-width="2" /><path d="M8 14h10c0-7-9-8-10-1-1 6 6 8 9 4" fill="none" stroke="#4ab02e" stroke-width="3" /><path d="M4 21Q14 24 23 8" fill="none" stroke="#8edb4d" stroke-width="2" /></svg></button>
      <button class="run active" aria-label="GGJ2013"><svg width="24" height="24" viewBox="0 0 24 24"><rect width="24" height="24" rx="4" fill="#0c8bf0" /><path d="M12 5v14M5 12h14M12 5c3 0 4 1 4 3M12 19c-4 0-6-2-7-7M12 19c4 0 7-3 7-7" fill="none" stroke="#fff" stroke-width="1.800" /></svg></button>
      <button class="run" aria-label="记事"><svg width="26" height="26" viewBox="0 0 26 26"><rect x="1" y="1" width="24" height="24" rx="3" fill="#f39a1d" /><path d="M5 5h14v16H5z" fill="#fff8e6" /><path d="M7 9h9M7 12h8M7 15h5" stroke="#c98a2e" /><path d="M11 18 21 5l3 2-10 12-4 2z" fill="#7a4a18" stroke="#fff" stroke-width=".8" /></svg></button>
    </div>
    <div class="tray">
      <span>链接</span>
      <svg width="12" height="8" viewBox="0 0 12 8" aria-hidden="true"><path d="M1 7l5-5 5 5" fill="none" stroke="#fff" stroke-width="1.300" /></svg>
      <svg width="17" height="14" viewBox="0 0 17 14" aria-hidden="true"><path d="M5.500 4.500h9v7h-8M15.500 6v4M1 2h4v3L3 7 1 5zM2 0v2M4 0v2M3 7v5h3" fill="none" stroke="#fff" stroke-width="1.200" /><path d="M7 6h6v4H7z" fill="#fff" /></svg>
      <svg width="14" height="14" viewBox="0 0 14 14" aria-hidden="true"><path d="M1 13C1 6 6 1 13 1M4 13c0-5 4-9 9-9M7 13c0-3 3-6 6-6M10 13q0-3 3-3" fill="none" stroke="#ddd" stroke-width="1.200" /></svg>
      <svg width="18" height="14" viewBox="0 0 18 14" aria-hidden="true"><path d="M1 5h3l4-4v12L4 9H1zM10 5q1.500 2 0 4M12 3q3 4 0 8M15 1q4 6 0 12" fill="none" stroke="#fff" /></svg>
      <svg width="24" height="14" viewBox="0 0 24 14" aria-hidden="true"><path d="M.5.5h23v13H.5z" fill="none" stroke="#fff" /><path d="M3 4h18M3 7h18" stroke="#fff" stroke-width="1.500" stroke-dasharray="2 1" /><path d="M6 10.500h12" stroke="#fff" /></svg>
      <span>中</span>
      <svg width="16" height="16" viewBox="0 0 16 16" aria-hidden="true"><path d="M2 2 14 0l2 13-13 3L0 4z" fill="#f2501e" /><path d="M12 4Q5 3 5 6c0 3 7 1 6 4-1 2-5 2-7 1" fill="none" stroke="#fff" stroke-width="2.200" /></svg>
    </div>
    <div class="clock"><span>16:44</span><span>2018/5/14</span></div>
    <button class="bubble" aria-label="通知"><svg width="16" height="17" viewBox="0 0 16 17"><path d="M.5 1.500h15v11H10L8 15.500 7 12.500H.5z" fill="none" stroke="#fff" stroke-width="1.200" /></svg></button>
  </div>
</div>

<style>
  :global(body) { margin: 0; background: #f0f0f0; }
  .app { min-height: 100vh; display: flex; flex-direction: column; position: relative; overflow: hidden; background: #f0f0f0; color: #000; font: 12px/16px "Open Sans", "Noto Sans CJK SC", sans-serif; box-sizing: border-box; }
  .app :global(*) { box-sizing: border-box; }
  button, input, select { font: inherit; color: inherit; border: 0; padding: 0; margin: 0; background: none; border-radius: 0; }
  button { white-space: nowrap; }
  ul { list-style: none; margin: 0; padding: 0; }
  svg { flex: none; display: block; }
  select { appearance: none; outline: 0; }
  .half { font: 10px/16px "DejaVu Sans Mono", monospace; }

  .title { display: flex; align-items: center; height: 24px; background: #fff; padding: 0 2px; gap: 5px; color: #999; }
  .caption { flex: 1; white-space: nowrap; overflow: hidden; font-family: Inter, "Noto Sans CJK SC", sans-serif; }
  .winbtns { display: flex; }
  .winbtns button { width: 46px; height: 20px; display: grid; place-items: center; }
  .ime { position: absolute; left: 700px; top: 0; }
  .ball { position: absolute; top: 0; right: 151px; width: 44px; height: 18px; border-radius: 0 0 22px 22px / 0 0 18px 18px; background: #3fc45c; border: 2px solid #2a9a55; border-top: 0; box-shadow: 0 0 0 2px #d5d5d5, 0 3px 6px #888; color: #fff; font-weight: bold; text-align: center; line-height: 14px; }

  .band { display: flex; align-items: center; background: linear-gradient(#fdfdfd, #f0f0f0); border-radius: 3px; min-width: 0; }
  .tool { display: flex; align-items: center; gap: 4px; }
  .off { color: #6d6d6d; }
  .tool :global(.arr) { margin-left: 2px; }
  .sep { width: 1px; height: 18px; background: #b4b4b4; flex: none; }
  .more { margin-left: auto; align-self: flex-start; padding: 4px 4px 0 0; }

  .menurow { display: grid; grid-template-columns: minmax(0, 935fr) minmax(0, 187fr) minmax(0, 240fr); gap: 2px; height: 28px; }
  .menus { display: flex; align-items: center; padding-left: 8px; gap: 9px; white-space: nowrap; }
  .menus > button { font-family: Inter, "Noto Sans CJK SC", sans-serif; }
  .extra { display: flex; gap: 7px; }
  .notice { justify-content: center; }
  .notice a { color: #2f6b00; text-decoration: none; }
  .account { padding-left: 4px; gap: 9px; }

  .toolrow { display: grid; grid-template-columns: minmax(0, 150fr) minmax(0, 550fr) minmax(0, 662fr); gap: 2px; height: 30px; margin: 1px 0; }
  .files { padding-left: 5px; gap: 6px; }
  .files button { display: flex; align-items: center; gap: 5px; }
  .edit { padding-left: 5px; gap: 7px; }
  .view { gap: 6px; }
  .mode { border: 1px solid #777; padding: 0 2px 0 1px; height: 24px; display: flex; align-items: center; }

  main { flex: 1; display: flex; gap: 5px; padding-bottom: 2px; }
  .nav { flex: 0 0 166px; display: flex; flex-direction: column; padding-right: 1px; }
  .navhead { display: flex; align-items: center; justify-content: space-between; height: 15px; border: 1px solid #8a8a8a; padding-right: 4px; margin-bottom: 2px; line-height: 13px; }
  .flat { height: 22px; flex: none; border: 1px solid #a0a0a0; border-top-color: #fff; border-left-color: #c8c8c8; background: #f0f0f0; margin-left: 1px; padding-top: 1px; }
  .expand { height: 27px; flex: none; display: flex; align-items: center; gap: 6px; padding-left: 7px; background: linear-gradient(#fff, #ededed); }
  .tree { flex: 1; background: #fff; border: 1px solid #828790; margin: 0 1px 1px 2px; padding: 1px 0; overflow: hidden; }
  .row { display: flex; align-items: center; height: 16px; white-space: nowrap; }
  .tree > li > .row { padding-left: 4px; }
  .tree > li > .row > span { padding-left: 5px; }
  .sub { margin-left: 12px; border-left: 1px dotted #808080; padding-left: 18px; }
  .last { border-left-color: transparent; }
  .node { display: flex; align-items: center; gap: 5px; height: 16px; }
  .picked { background: #d9d9d9; padding-right: 1px; }
  .ne { font-size: 9px; line-height: 8px; margin: 0 0 8px 2px; background: #ffd500; }

  .work { flex: 1; min-width: 0; display: flex; flex-direction: column; }
  .comp { height: 27px; flex: none; padding-left: 4px; gap: 6px; margin-bottom: 1px; }
  .comp .tool :global(.arr) { margin-left: -2px; }
  .pick { display: flex; align-items: center; gap: 6px; margin: 0 -3px 0 -2px; }
  .combo { display: flex; align-items: center; width: 63px; height: 24px; background: #fff; padding: 0 4px 0 2px; }
  .combo select { flex: 1; min-width: 0; }
  .panes { flex: 1; display: flex; gap: 4px; }
  .list { flex: 0 0 184px; display: flex; flex-direction: column; border-right: 1px solid #a0a0a0; }
  .find { display: flex; align-items: center; height: 28px; margin-top: 3px; background: #fff; gap: 5px; padding-left: 1px; }
  .find input { width: 157px; height: 24px; border: 1px solid #7a7a7a; padding: 0 2px 4px; background: #fff; }
  .find input::placeholder { color: #767676; }
  .listbox { flex: 1; display: flex; background: #fff; border: 1px solid #828790; margin-top: -1px; padding-left: 31px; }
  .listbox ul { flex: 1; padding-top: 1px; }
  .listbox li { display: flex; height: 16px; }
  .member { display: flex; align-items: center; gap: 6px; padding: 0 5px 0 3px; margin-left: -1px; height: 16px; }
  .on.member { background: #316ac5; }
  .scroll { flex: 0 0 17px; display: flex; flex-direction: column; background: #f0f0f0; }
  .cap { height: 17px; flex: none; display: grid; place-items: center; }
  .thumb { flex: 1; background: #cdcdcd; }
  .low .thumb { flex: 0 0 25%; margin-top: auto; }

  .props { flex: 1; min-width: 0; position: relative; display: flex; flex-direction: column; background: #fff; border-right: 1px solid #d0d0d0; margin-right: 1px; }
  .ptab { border-bottom: 1px solid #d0d0d0; height: 22px; display: flex; }
  .ptab span { padding: 2px 7px 0 6px; border: 1px solid #d0d0d0; border-bottom: 0; background: #fff; margin-bottom: -1px; }
  .pbody { flex: 1; display: flex; align-items: stretch; border: 1px solid #a0a0a0; margin: 3px; }
  table { flex: 1; align-self: flex-start; border-collapse: collapse; table-layout: fixed; width: 100%; font-family: "Noto Sans CJK SC", sans-serif; }
  th, td { border: 1px solid #c0c0c0; border-top: 0; padding: 0; height: 19px; text-align: left; font-weight: normal; line-height: 16px; }
  thead th { height: 22px; text-align: center; background: linear-gradient(#fcfcfc, #eee); }
  .num { width: 22px; text-align: center; background: #f2f2f2; border-left: 0; }
  th.key { width: 190px; }
  thead .val { background: linear-gradient(#f8dc9f, #f0bf63); }
  .cell { display: flex; align-items: center; height: 18px; overflow: hidden; white-space: nowrap; }
  .plusbox { width: 19px; padding-left: 2px; flex: none; }
  .v { padding-left: 1px; }
  tr.key td:nth-child(2) { color: #00f; }
  tr.dim td { color: #808080; }
  tr.sel td { background: #0078d7; color: #fff; }
  tr.sel td.v { background: #d9ebfa; color: #000; }
  tr.sel .num { background: #ffd48a; color: #6b1d1d; }

  .dialog { position: absolute; left: 256px; right: 20px; top: 20px; bottom: 2px; border: 1px solid #333; box-shadow: inset 0 0 0 1px #e8f4fb, inset -2px 0 0 #5fc4e0; background: #b9d1ea; padding: 3px 7px 6px; display: flex; flex-direction: column; }
  .dtitle { height: 27px; flex: none; margin: 0 -5px; padding: 9px 5px 0; background: linear-gradient(#99b4d1, #b9d1ea); line-height: 14px; }
  .client { flex: 1; display: flex; flex-direction: column; background: #f0f0f0; min-height: 0; }
  .tabs { display: flex; align-items: flex-end; height: 21px; padding-left: 2px; }
  .tabs button { height: 19px; padding: 0 8px 0 6px; border: 1px solid #d9d9d9; border-bottom: 0; background: #f0f0f0; }
  .tabs .on { height: 21px; background: #fff; padding: 0 12px 2px 6px; }
  .pane { flex: 1; display: flex; flex-direction: column; align-items: flex-start; border: 1px solid #dcdcdc; border-width: 1px 2px 2px 2px; padding: 3px 2px 2px 3px; min-height: 0; background: linear-gradient(#f0f0f0, #f0f0f0) content-box #fff; }
  .drow { height: 28px; flex: none; gap: 7px; padding: 0 6px; }
  .lab { margin: 0 -4px; }
  .combo.wide { width: 75px; margin: 0 -2px; }
  .pressed { display: flex; border: 1px solid #0078d7; background: #dceaf5; height: 23px; padding: 0 3px; margin: 0 -2px; }
  .canvas { flex: 1; align-self: stretch; min-height: 0; border: 2px solid #f00; background: #15181f; overflow: hidden; }
  .ghost text { font: 12px "DejaVu Sans Mono", monospace; fill: #303741; }
  .mark text { font: bold 7px "DejaVu Sans Mono", monospace; fill: #e8f4fa; }
  .level { font: 7px "DejaVu Sans Mono", monospace; fill: #00e400; }
  .snaps { display: flex; flex: none; height: 27px; gap: 2px; padding-top: 2px; }
  .snaps .band { padding: 0 5px 0 2px; gap: 5px; }
  .dstatus { display: flex; flex: none; height: 23px; margin-top: 2px; gap: 2px; align-items: stretch; }
  .dstatus span { border: 1px solid #d4d4d4; line-height: 20px; padding-left: 4px; background: #f4f4f4; }
  .coord { width: 97px; }
  .dstatus .hint { flex: 1; padding-left: 1px; }
  .dstatus svg { align-self: flex-end; margin-left: -14px; }

  .status { display: grid; grid-template-columns: 148fr 78fr 98fr 48fr 914fr 70px; gap: 2px; height: 21px; padding-bottom: 1px; font-family: "Noto Sans CJK SC", sans-serif; }
  .status > span { border: 1px solid #d4d4d4; background: linear-gradient(#fdfdfd, #f0f0f0); padding-left: 1px; line-height: 18px; white-space: nowrap; overflow: hidden; }

  .taskbar { height: 40px; flex: none; display: flex; background: linear-gradient(90deg, #001014, #020606 80%, #000); color: #fff; }
  .start { width: 48px; background: #000; display: grid; place-items: center; }
  .cortana { width: 344px; background: #333; display: flex; align-items: center; padding: 0 15px 0 9px; gap: 5px; }
  .cortana input { flex: 1; min-width: 0; font-size: 14px; outline: 0; }
  .cortana input::placeholder { color: #a0a0a0; }
  .apps { display: flex; gap: 2px; }
  .pinned { gap: 1px; margin-left: 7px; }
  .apps button { width: 48px; height: 40px; display: grid; place-items: center; }
  .apps .run { border-bottom: 3px solid #76b9ed; }
  .apps .active { background: #3a4246; }
  .tray { margin-left: auto; display: flex; align-items: center; gap: 9px; }
  .clock { width: 66px; margin-left: 14px; display: flex; flex-direction: column; align-items: center; justify-content: center; line-height: 19px; }
  .bubble { width: 48px; display: grid; place-items: center; margin-right: 9px; }
</style>
